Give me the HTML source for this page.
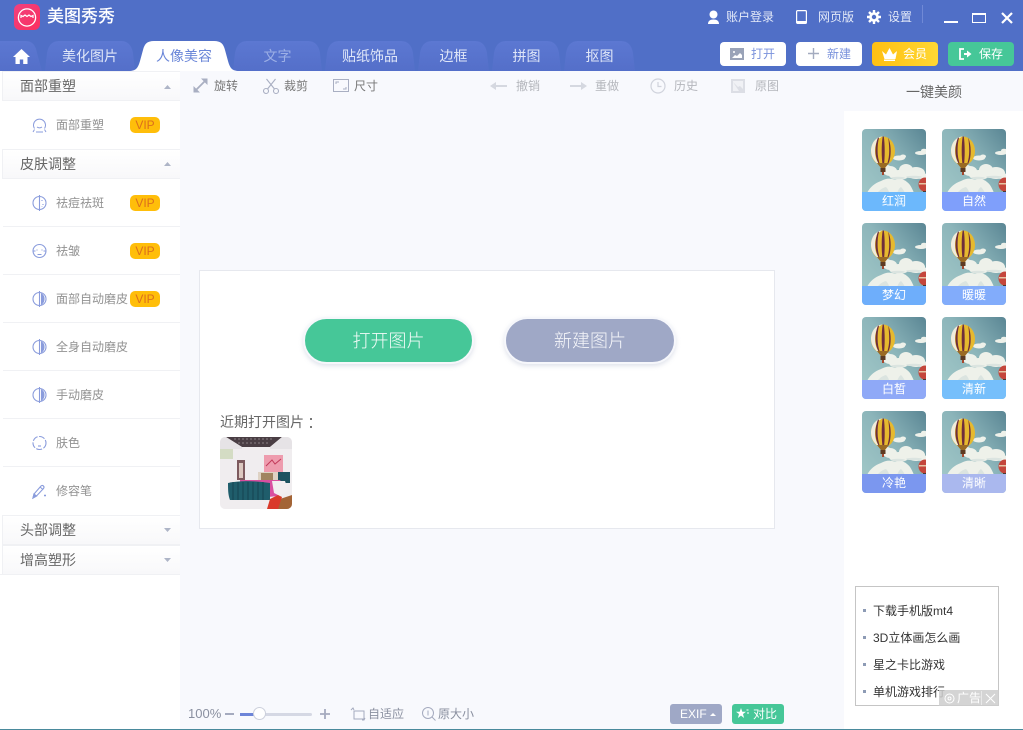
<!DOCTYPE html>
<html><head><meta charset="utf-8">
<style>
*{margin:0;padding:0;box-sizing:border-box}
html,body{width:1023px;height:730px;overflow:hidden;background:#f8f9fd}
body{position:relative;font-family:"Liberation Sans","Noto Sans CJK SC",sans-serif;font-size:12px;color:#666}
.a{position:absolute;white-space:nowrap}
svg{position:absolute;overflow:visible}
.hd{position:absolute;left:0;top:0;width:1023px;height:71px;background:#506fc7}
.w{color:#e4eaf8;font-size:12px;line-height:16px}
.tab{position:absolute;top:41px;height:30px;color:#dfe6f8;font-size:14px;line-height:30px;text-align:center}
.btn{position:absolute;top:42px;height:24px;border-radius:4px;font-size:12px;line-height:24px}
.side{position:absolute;left:0;top:71px;width:180px;height:659px;background:#fff}
.sh{position:absolute;left:2px;width:178px;height:30px;background:linear-gradient(#fff,#f8f8fa);border:1px solid #f0f1f4;border-right:0;font-size:14px;line-height:28px;padding-left:17px;color:#666}
.it{position:absolute;left:56px;font-size:12px;line-height:16px;color:#929292}
.ln{position:absolute;left:3px;width:177px;height:1px;background:#f0f1f4}
.vip{position:absolute;left:130px;width:30px;height:16px;border-radius:5px;background:#ffbe0a;color:#dc6f1c;font-size:12px;line-height:16px;text-align:center}
.t{font-size:12px;line-height:16px;color:#777}
.d{font-size:12px;line-height:16px;color:#b4b6bc}
.th{position:absolute;width:64px;height:82px;border-radius:4px;overflow:hidden}
.th svg{left:0;top:0}
.th b{position:absolute;left:0;top:63px;width:64px;height:19px;font-weight:normal;color:#fff;font-size:12px;line-height:19px;text-align:center}
.ad{font-size:12px;line-height:16px;color:#333}
.sq{position:absolute;left:863px;width:3px;height:3px;background:#8d9bb5}
</style></head><body>
<div class="hd"></div>

<!-- logo -->
<svg style="left:14px;top:4px" width="26" height="26" viewBox="0 0 26 26">
<defs><linearGradient id="lg" x1="0" y1="0" x2="1" y2="1"><stop offset="0" stop-color="#f0417f"/><stop offset="1" stop-color="#fb2f5e"/></linearGradient></defs>
<rect width="26" height="26" rx="6" fill="url(#lg)"/>
<circle cx="13" cy="13.5" r="8.600" fill="none" stroke="#fff" stroke-width="1.300"/>
<path d="M7 14v-2.500l2 1 2-1.500 2 1.500 2-1.500 2 1.500 2-1V14" fill="none" stroke="#fff" stroke-width="1.200"/>
</svg>
<div class="a" style="left:47px;top:7px;font-size:17px;line-height:20px;color:#fff;font-weight:500">美图秀秀</div>

<!-- top right -->
<svg style="left:707px;top:10px" width="13" height="14" viewBox="0 0 13 14"><circle cx="6.500" cy="4.500" r="4" fill="#fff"/><path d="M1 14c0-3 2-4.500 5.500-4.500S12 11 12 14z" fill="#fff"/></svg>
<div class="a w" style="left:726px;top:9px">账户登录</div>
<svg style="left:796px;top:10px" width="11" height="14"><rect x=".6" y=".6" width="9.800" height="12.800" rx="1" fill="none" stroke="#fff" stroke-width="1.200"/><rect x="1" y="11" width="9" height="2.500" fill="#fff"/></svg>
<div class="a w" style="left:818px;top:9px">网页版</div>
<svg style="left:867px;top:10px" width="14" height="14" viewBox="0 0 14 14"><circle cx="7" cy="7" r="3.500" fill="none" stroke="#fff" stroke-width="2.600"/><path d="M7 0v3M7 11v3M0 7h3M11 7h3M2 2l2 2M10 10l2 2M12 2l-2 2M4 10l-2 2" stroke="#fff" stroke-width="2.400"/></svg>
<div class="a w" style="left:888px;top:9px">设置</div>
<div class="a" style="left:922px;top:5px;width:1px;height:18px;background:#7089d6"></div>
<div class="a" style="left:944px;top:21px;width:14px;height:2px;background:#fff"></div>
<div class="a" style="left:972px;top:13px;width:14px;height:10px;border:1.500px solid #fff;border-top-width:2px"></div>
<svg style="left:1001px;top:12px" width="12" height="12"><path d="M1 1l10 10M11 1L1 11" stroke="#fff" stroke-width="2.200"/></svg>

<!-- tabs -->
<svg style="left:0;top:0" width="1023" height="71">
<defs><linearGradient id="tg" x1="0" y1="0" x2="0" y2="1"><stop offset="0" stop-color="#5c78d2"/><stop offset="1" stop-color="#546fc9"/></linearGradient></defs>
<g fill="url(#tg)">
<path d="M-10 71V41H26Q35 41 37 53L42 71Z"/>
<path d="M45 71L47 53Q49 41 59 41H121Q131 41 133 53L135 71Z"/>
<path d="M233 71L235 53Q237 41 247 41H308Q318 41 320 53L322 71Z"/>
<path d="M325 71L327 53Q329 41 339 41H401Q411 41 413 53L415 71Z"/>
<path d="M418 71L420 53Q422 41 432 41H475Q485 41 487 53L489 71Z"/>
<path d="M492 71L494 53Q496 41 506 41H547Q557 41 559 53L561 71Z"/>
<path d="M564 71L566 53Q568 41 578 41H621Q631 41 633 53L635 71Z"/>
</g></svg>
<svg style="left:13px;top:49px" width="17" height="15" viewBox="0 0 17 15"><path d="M8.500 0L0 8h2.500v7h4.300v-4.500h3.400V15h4.300V8H17z" fill="#fff"/></svg>
<div class="tab" style="left:45px;width:90px">美化图片</div>
<div class="tab" style="left:233px;width:89px;color:#9db0e6">文字</div>
<div class="tab" style="left:325px;width:90px">贴纸饰品</div>
<div class="tab" style="left:418px;width:71px">边框</div>
<div class="tab" style="left:492px;width:69px">拼图</div>
<div class="tab" style="left:564px;width:71px">抠图</div>
<svg style="left:129px;top:41px" width="112" height="30" viewBox="0 0 112 30"><path d="M0 30c7 0 9-3 11-10l3-11c1.500-6 4-9 11-9h60c7 0 9.500 3 11 9l3 11c2 7 4 10 11 10z" fill="#fff"/></svg>
<div class="a" style="left:156px;top:41px;height:30px;line-height:30px;font-size:14px;color:#6a86d8">人像美容</div>

<!-- buttons -->
<div class="btn" style="left:720px;width:66px;background:#fff;color:#7a92dc;padding-left:31px">打开</div>
<svg style="left:730px;top:48px" width="14" height="12"><rect width="14" height="12" fill="#9aa3b8"/><path d="M2 10l3-3 2 1 3-3 2 2v3z" fill="#fff"/><circle cx="4" cy="4" r="1" fill="#fff"/></svg>
<div class="btn" style="left:796px;width:66px;background:#fff;color:#7a92dc;padding-left:31px">新建</div>
<svg style="left:808px;top:48px" width="11" height="11"><path d="M5.500 0v11M0 5.500h11" stroke="#a3abbf" stroke-width="1.400"/></svg>
<div class="btn" style="left:872px;width:66px;background:linear-gradient(90deg,#ffc012,#ffd733);color:#fff;padding-left:31px">会员</div>
<svg style="left:881px;top:47px" width="17" height="14" viewBox="0 0 17 14"><path d="M1 4l4 3.500L8.500 1 12 7.500 16 4l-1.500 8h-11zM3 12.500h11V14H3z" fill="#fff"/></svg>
<div class="btn" style="left:948px;width:66px;background:#46c798;color:#fff;padding-left:31px">保存</div>
<svg style="left:959px;top:48px" width="13" height="12" viewBox="0 0 13 12"><path d="M5 1H1v10h4" fill="none" stroke="#fff" stroke-width="1.800"/><path d="M5 5h3V2.500L12.500 6 8 9.500V7H5z" fill="#fff"/></svg>

<!-- sidebar -->
<div class="side"></div>
<div class="sh" style="top:71px">面部重塑</div>
<svg style="left:164px;top:85px" width="7" height="4"><path d="M3.500 0L7 4H0z" fill="#aeb5c7"/></svg>
<svg style="left:32px;top:117px" width="15" height="16" viewBox="0 0 15 16" fill="none" stroke="#8a9cdc"><path d="M2.500 11.500A6 6 0 1 1 12.500 11.500"/><path d="M5 10c1.500 1 3.500 1 5 0"/><path d="M1 15l1.500-2.500M14 15l-1.500-2.500M4 15h7"/></svg>
<div class="it" style="top:117px">面部重塑</div><div class="vip" style="top:117px">VIP</div>

<div class="sh" style="top:149px">皮肤调整</div>
<svg style="left:164px;top:162px" width="7" height="4"><path d="M3.500 0L7 4H0z" fill="#aeb5c7"/></svg>

<svg style="left:32px;top:195px" width="15" height="16" viewBox="0 0 15 16" fill="none" stroke="#8a9cdc" stroke-width="1.100"><circle cx="7.500" cy="8" r="6.500"/><path d="M7.500 0v16M10 5v1M11 9v1M10 11.500v.5"/></svg>
<div class="it" style="top:195px">祛痘祛斑</div><div class="vip" style="top:195px">VIP</div>
<div class="ln" style="top:226px"></div>

<svg style="left:32px;top:243px" width="15" height="16" viewBox="0 0 15 16" fill="none" stroke="#8a9cdc" stroke-width="1.100"><circle cx="7.500" cy="8" r="6.500"/><path d="M1 8h2.500M11.500 8H14M5 6.500v1M10 6.500v1M5.500 11.500h4"/></svg>
<div class="it" style="top:243px">祛皱</div><div class="vip" style="top:243px">VIP</div>
<div class="ln" style="top:274px"></div>

<svg style="left:32px;top:291px" width="15" height="16" viewBox="0 0 15 16" fill="none" stroke="#8a9cdc" stroke-width="1.100"><circle cx="7.500" cy="8" r="6.500"/><path d="M7.500 0v16"/><path d="M9.500 3v10c1.500-1 2.500-3 2.500-5s-1-4-2.500-5z" fill="#8a9cdc"/></svg>
<div class="it" style="top:291px">面部自动磨皮</div><div class="vip" style="top:291px">VIP</div>
<div class="ln" style="top:322px"></div>

<svg style="left:32px;top:339px" width="15" height="16" viewBox="0 0 15 16" fill="none" stroke="#8a9cdc" stroke-width="1.100"><circle cx="7.500" cy="8" r="6.500"/><path d="M7.500 0v16"/><path d="M9.500 3v10c1.500-1 2.500-3 2.500-5s-1-4-2.500-5z" fill="#8a9cdc"/></svg>
<div class="it" style="top:339px">全身自动磨皮</div>
<div class="ln" style="top:370px"></div>

<svg style="left:32px;top:387px" width="15" height="16" viewBox="0 0 15 16" fill="none" stroke="#8a9cdc" stroke-width="1.100"><circle cx="7.500" cy="8" r="6.500"/><path d="M7.500 0v16"/><path d="M9.500 3v10c1.500-1 2.500-3 2.500-5s-1-4-2.500-5z" fill="#8a9cdc"/></svg>
<div class="it" style="top:387px">手动磨皮</div>
<div class="ln" style="top:418px"></div>

<svg style="left:32px;top:435px" width="15" height="16" viewBox="0 0 15 16" fill="none" stroke="#8a9cdc" stroke-width="1.100"><circle cx="7.500" cy="8" r="6.500" stroke-dasharray="6 1.500"/><path d="M6 11h3"/></svg>
<div class="it" style="top:435px">肤色</div>
<div class="ln" style="top:466px"></div>

<svg style="left:32px;top:483px" width="16" height="16" viewBox="0 0 16 16" fill="none" stroke="#8a9cdc" stroke-width="1.100"><path d="M1 15l1-4 7-8c1.500-1.500 4 .5 2.500 2.500l-7 7.500zM8 4l3 2.500M13 11.500v2M12 12.500h2"/><path d="M1 15l1-4 2.500 2z" fill="#8a9cdc"/></svg>
<div class="it" style="top:483px">修容笔</div>

<div class="sh" style="top:515px">头部调整</div>
<svg style="left:164px;top:528px" width="7" height="4"><path d="M0 0h7L3.500 4z" fill="#aeb5c7"/></svg>
<div class="sh" style="top:545px">增高塑形</div>
<svg style="left:164px;top:558px" width="7" height="4"><path d="M0 0h7L3.500 4z" fill="#aeb5c7"/></svg>
<div class="a" style="left:0;top:574px;width:180px;height:1px;background:#f0f1f4"></div>

<!-- toolbar -->
<svg style="left:193px;top:78px" width="15" height="15" viewBox="0 0 15 15" fill="none" stroke="#a9afc2" stroke-width="1.800"><path d="M3 12L12 3"/><path d="M8 .5h6.500V7zM.5 8v6.500H7z" fill="#a9afc2" stroke="none"/></svg>
<div class="a t" style="left:214px;top:78px">旋转</div>
<svg style="left:263px;top:78px" width="16" height="16" viewBox="0 0 16 16" fill="none" stroke="#a9afc2" stroke-width="1.100"><circle cx="3" cy="13" r="2.500"/><circle cx="13" cy="13" r="2.500"/><path d="M4.500 11L12.500 1M11.500 11L3.500 1"/></svg>
<div class="a t" style="left:284px;top:78px">裁剪</div>
<svg style="left:333px;top:79px" width="16" height="13" fill="none" stroke="#a9afc2"><rect x=".5" y=".5" width="15" height="12"/><path d="M3 5V3h3M13 8v2h-3"/></svg>
<div class="a t" style="left:354px;top:78px">尺寸</div>

<svg style="left:490px;top:82px" width="17" height="8"><path d="M0 4l6-4v3h11v2H6v3z" fill="#d5d8e0"/></svg>
<div class="a d" style="left:516px;top:78px">撤销</div>
<svg style="left:570px;top:82px" width="17" height="8"><path d="M17 4l-6-4v3H0v2h11v3z" fill="#d5d8e0"/></svg>
<div class="a d" style="left:595px;top:78px">重做</div>
<svg style="left:650px;top:78px" width="16" height="16" fill="none" stroke="#d0d3dc" stroke-width="1.200"><circle cx="8" cy="8" r="7"/><path d="M8 4v4.500h3.500"/></svg>
<div class="a d" style="left:674px;top:78px">历史</div>
<svg style="left:731px;top:79px" width="14" height="14"><rect width="14" height="14" fill="#dcdee5"/><rect x="2" y="2" width="10" height="10" fill="#f0f1f5"/><path d="M2 3l5 5 2-1 3 3v2H8z" fill="#dcdee5"/></svg>
<div class="a d" style="left:755px;top:78px">原图</div>

<!-- right panel -->
<div class="a" style="left:844px;top:71px;width:179px;height:659px;background:#fff"></div>
<div class="a" style="left:844px;top:71px;width:179px;height:40px;background:#f8f9fd"></div>
<div class="a" style="left:906px;top:84px;font-size:14px;line-height:16px;color:#666">一键美颜</div>

<svg width="0" height="0" style="left:0;top:0"><defs>
<linearGradient id="sky" x1="1" y1="0" x2="0" y2="1"><stop offset="0" stop-color="#5a8694"/><stop offset=".45" stop-color="#8cb5ba"/><stop offset="1" stop-color="#a5cbca"/></linearGradient>
<g id="bal">
<rect width="64" height="82" fill="url(#sky)"/>
<g fill="#eef1ea">
<ellipse cx="37" cy="29" rx="6" ry="2.500"/><ellipse cx="41" cy="27.500" rx="3" ry="2"/>
<ellipse cx="59" cy="24" rx="6" ry="2"/><ellipse cx="62" cy="21.500" rx="3" ry="1.800"/>
<ellipse cx="28" cy="42" rx="7" ry="5"/><ellipse cx="25" cy="39" rx="4" ry="3"/>
<ellipse cx="44" cy="41" rx="7" ry="6"/><ellipse cx="54" cy="44" rx="9" ry="6"/><ellipse cx="37" cy="46" rx="10" ry="5"/>
<ellipse cx="60" cy="47" rx="6" ry="3"/>
<path d="M5 64c3-6 8-10 14-12 5-3 10-3 14-1 5-1 9-1 12 2 3 2 5 6 7 11z"/>
</g>
<g fill="#dbe4e0">
<path d="M15 64c3-3 5-5 9-6 2 2 3 4 3 6zM35 64c1-2 2-5 4-6 2 2 3 4 4 6z"/>
<ellipse cx="36" cy="49" rx="7" ry="1.200"/><ellipse cx="52" cy="48" rx="8" ry="1.200"/>
</g>
<ellipse cx="21" cy="22" rx="12" ry="14.500" fill="#e6b92e"/>
<path d="M9 22c0-8 5-14.500 12-14.500-5 1-8 7-8 14.500s2.500 11 5 14C13 34 9 28 9 22z" fill="#f0ecdc"/>
<path d="M15.800 9c-1.500 4-2.300 8-2.300 13s1.300 9 3.300 13l1.200.5c-1.500-4-2.400-9-2.400-13.500s.2-9 1.500-13.500zM20.700 7.500c-.7 4-1 9-1 14.500s.3 10 1 14.500h1.200c.6-4.500 .8-9 .8-14.500s-.3-10.500-.9-14.500zM26.200 8.500c.6 4 1 9 1 13.500s-.7 9-2 13l1.500-1.200c1.300-3 2-7 2-11.800s-.8-9.500-2.500-13.500z" fill="#6e2e3c"/>
<path d="M15 34l4 5h4l4-5z" fill="#9a6a24"/>
<rect x="18.500" y="39" width="5" height="4" fill="#5d3a22"/>
<rect x="20" y="43" width="2" height="3" fill="#a5482e"/>
<ellipse cx="63" cy="55.500" rx="6.500" ry="7" fill="#c4463c"/>
<rect x="57" y="54" width="7" height="1.500" fill="#e5c4a4"/>
<rect x="61" y="62" width="3" height="2" fill="#4a3a32"/>
</g></defs></svg>

<div class="th" style="left:862px;top:129px"><svg width="64" height="82"><use href="#bal"/></svg><b style="background:#6cb8fc">红润</b></div>
<div class="th" style="left:942px;top:129px"><svg width="64" height="82"><use href="#bal"/></svg><b style="background:#7f9ffb">自然</b></div>
<div class="th" style="left:862px;top:223px"><svg width="64" height="82"><use href="#bal"/></svg><b style="background:#6eaefb">梦幻</b></div>
<div class="th" style="left:942px;top:223px"><svg width="64" height="82"><use href="#bal"/></svg><b style="background:#82acfb">暖暖</b></div>
<div class="th" style="left:862px;top:317px"><svg width="64" height="82"><use href="#bal"/></svg><b style="background:#8fa9f7">白皙</b></div>
<div class="th" style="left:942px;top:317px"><svg width="64" height="82"><use href="#bal"/></svg><b style="background:#76bffb">清新</b></div>
<div class="th" style="left:862px;top:411px"><svg width="64" height="82"><use href="#bal"/></svg><b style="background:#7b97ef">冷艳</b></div>
<div class="th" style="left:942px;top:411px"><svg width="64" height="82"><use href="#bal"/></svg><b style="background:#aab8ee">清晰</b></div>

<!-- main card -->
<div class="a" style="left:199px;top:270px;width:576px;height:259px;background:#fff;border:1px solid #e6e8ee"></div>
<div class="a" style="left:303px;top:317px;width:171px;height:47px;border-radius:24px;background:#46c798;border:2px solid #f6f7fb;box-shadow:0 2px 5px rgba(150,160,190,.3);color:#f2fbf8;font-size:18px;font-weight:300;line-height:45px;text-align:center">打开图片</div>
<div class="a" style="left:504px;top:317px;width:172px;height:47px;border-radius:24px;background:#9fa8c6;border:2px solid #f6f7fb;box-shadow:0 2px 5px rgba(150,160,190,.3);color:#f5f6fa;font-size:18px;font-weight:300;line-height:45px;text-align:center">新建图片</div>
<div class="a" style="left:220px;top:414px;font-size:14px;line-height:17px;color:#666">近期打开图片</div>
<div class="a" style="left:310px;top:418px;width:2px;height:2px;background:#777"></div>
<div class="a" style="left:310px;top:426px;width:2px;height:2px;background:#777"></div>

<svg style="left:220px;top:437px" width="72" height="72" viewBox="0 0 72 72">
<defs><clipPath id="rc"><rect width="72" height="72" rx="5"/></clipPath></defs>
<g clip-path="url(#rc)">
<rect width="72" height="72" fill="#f0edef"/>
<path d="M6 0h56L50 10H22z" fill="#4a3e44"/>
<path d="M14 2h40M18 6h32" stroke="#8b8085" stroke-dasharray="2 2"/>
<path d="M0 0h6l16 10v2H0zM72 0h-10L50 10v2h22z" fill="#e6e3e6"/>
<rect x="0" y="12" width="13" height="10" fill="#d4dcc4"/>
<rect x="17" y="23" width="8" height="20" fill="#7d5a5e"/>
<rect x="19" y="26" width="4" height="15" fill="#dcc8c0"/>
<rect x="44" y="18" width="19" height="17" fill="#ee9cae"/>
<path d="M46 29l6-6 3 4 6-5" stroke="#c23a5a" fill="none"/>
<rect x="38" y="35" width="22" height="9" fill="#ded2c4"/>
<rect x="41" y="36" width="12" height="7" fill="#a08460"/>
<rect x="58" y="35" width="12" height="11" fill="#1d5360"/>
<path d="M20 43h40l6 8-8 8-10 1H20z" fill="#d94fa0"/>
<path d="M52 44h13l3 9-8 6-6-3z" fill="#f2eef0"/>
<path d="M8 46c14-3 28-2 42 0v17H10c-2-5-2-11-2-17z" fill="#1f5d6b"/>
<path d="M13 45v18M18 45v18M23 45v18M28 45v18M33 45v18M38 45v18M43 45v18" stroke="#154450"/>
<path d="M56 72l4-10 12-4v14z" fill="#a36436"/>
<path d="M47 72l3-10 8-4 4 2-4 12z" fill="#d93a2a"/>
</g></svg>

<!-- bottom bar -->
<div class="a" style="left:188px;top:706px;font-size:13px;line-height:16px;color:#8a90a0">100%</div>
<div class="a" style="left:225px;top:713px;width:9px;height:2px;background:#a5abbf"></div>
<div class="a" style="left:240px;top:713px;width:72px;height:3px;border-radius:2px;background:#d5d8e4"></div>
<div class="a" style="left:240px;top:713px;width:16px;height:3px;background:#6d85d8"></div>
<div class="a" style="left:253px;top:707px;width:13px;height:13px;border-radius:50%;background:#fff;border:1px solid #ccd0dc"></div>
<svg style="left:320px;top:709px" width="10" height="10"><path d="M5 0v10M0 5h10" stroke="#a5abbf" stroke-width="1.800"/></svg>
<svg style="left:351px;top:707px" width="15" height="14" fill="none" stroke="#a5abbf"><path d="M0 3l2-2 1 2M3 4h10v8H3zM11 13l2 0 1-2"/></svg>
<div class="a" style="left:368px;top:706px;color:#8a90a0;line-height:16px">自适应</div>
<svg style="left:422px;top:707px" width="14" height="14" fill="none" stroke="#a5abbf"><circle cx="6" cy="6" r="5.500"/><path d="M10 10l3.500 3.500M6 3.500v5"/></svg>
<div class="a" style="left:438px;top:706px;color:#8a90a0;line-height:16px">原大小</div>

<div class="a" style="left:670px;top:704px;width:52px;height:20px;border-radius:3px;background:#9fa8c6;color:#fff;font-size:12px;line-height:20px;padding-left:10px">EXIF</div>
<svg style="left:710px;top:713px" width="6" height="3"><path d="M3 0l3 3H0z" fill="#fff"/></svg>
<div class="a" style="left:732px;top:704px;width:52px;height:20px;border-radius:3px;background:#46c798;color:#fff;font-size:12px;line-height:20px;padding-left:21px">对比</div>
<svg style="left:736px;top:708px" width="13" height="12" viewBox="0 0 13 12"><path d="M5 0l1.300 3.700H10L7 6l1.100 4L5 7.600 1.900 10 3 6 0 3.700h3.700z" fill="#fff"/><path d="M10.500 2h2M11 5h2" stroke="#fff"/></svg>

<!-- ad -->
<div class="a" style="left:855px;top:586px;width:144px;height:120px;background:#fff;border:1px solid #c5c5c5"></div>
<div class="sq" style="top:609px"></div><div class="a ad" style="left:873px;top:603px">下载手机版mt4</div>
<div class="sq" style="top:636px"></div><div class="a ad" style="left:873px;top:630px">3D立体画怎么画</div>
<div class="sq" style="top:663px"></div><div class="a ad" style="left:873px;top:657px">星之卡比游戏</div>
<div class="sq" style="top:690px"></div><div class="a ad" style="left:873px;top:684px">单机游戏排行</div>
<div class="a" style="left:939px;top:690px;width:60px;height:16px;background:rgba(205,205,205,.85);color:#fff;font-size:12px;line-height:16px;padding-left:18px">广告</div>
<svg style="left:944px;top:693px" width="11" height="11" fill="none" stroke="#fff"><circle cx="5.500" cy="5.500" r="4.500"/><circle cx="5.500" cy="5.500" r="1.500"/></svg>
<div class="a" style="left:981px;top:691px;width:1px;height:14px;background:#e8e8e8"></div>
<svg style="left:986px;top:694px" width="9" height="9"><path d="M0 0l9 9M9 0L0 9" stroke="#fff"/></svg>

<div class="a" style="left:0;top:729px;width:1023px;height:1px;background:#4a8a9c"></div>
</body></html>
